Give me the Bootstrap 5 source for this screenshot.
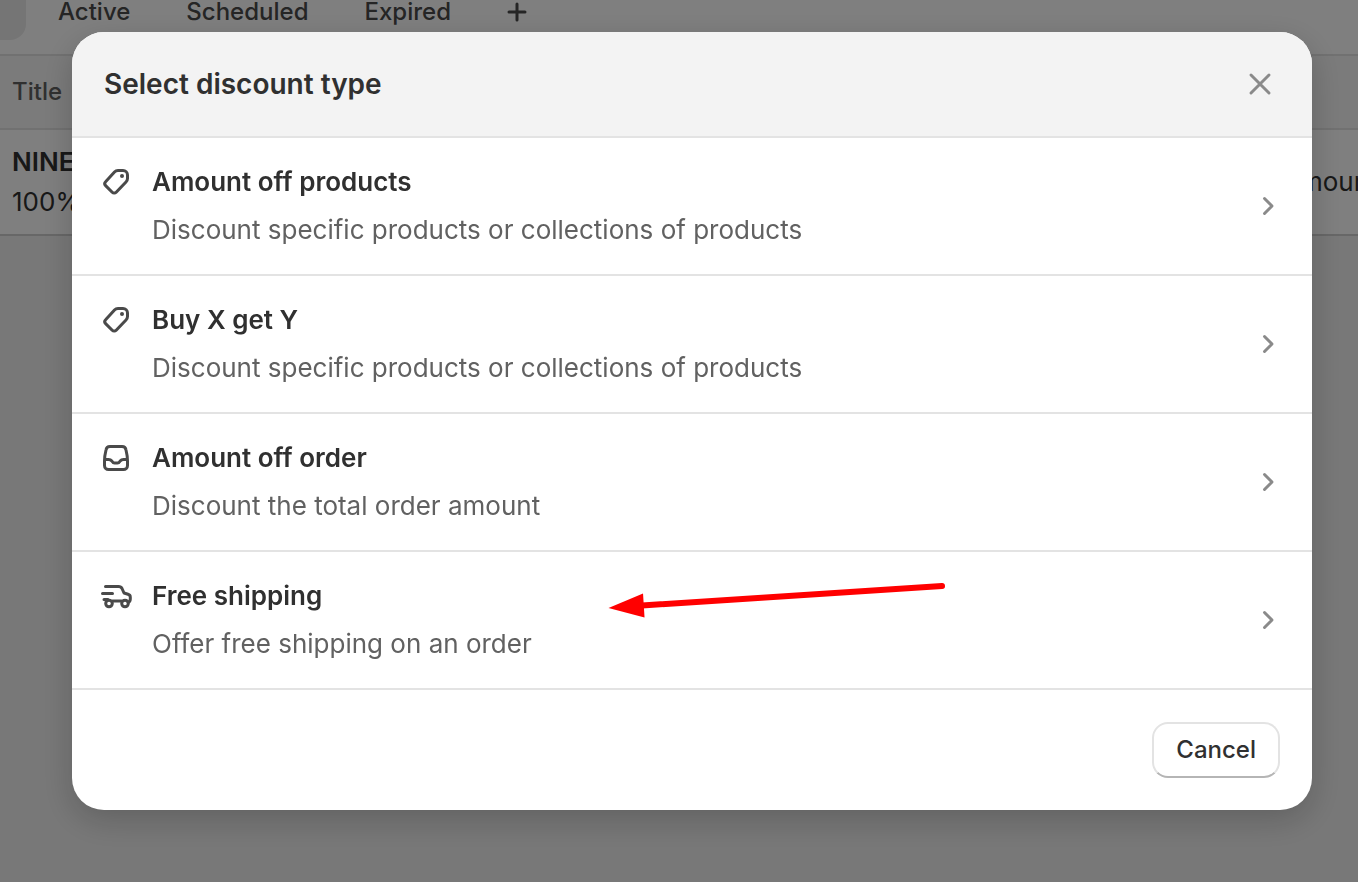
<!DOCTYPE html>
<html lang="en">
<head>
<meta charset="utf-8">
<meta name="viewport" content="width=device-width, initial-scale=1">
<title>Discounts</title>
<link href="https://cdn.jsdelivr.net/npm/bootstrap@5.3.0/dist/css/bootstrap.min.css" rel="stylesheet">
<style>
  body { font-family: Inter, "Liberation Sans", sans-serif; font-size: 26px; line-height: 40px; color: #303030; background: #f1f1f1; }
  .page { background: #fff; border-bottom: 2px solid #cfcfcf; }
  .tabs { height: 56px; padding-left: 58px; gap: 56px; border-bottom: 2px solid #e3e3e3; font-size: 24px; font-weight: 500; line-height: 24px; }
  .tabs a { color: #4a4a4a; }
  .tab-all { top: 0; left: 0; width: 26px; height: 40px; background: #ebebeb; border-radius: 0 0 16px 0; }
  .tabs button { color: #4a4a4a; }
  .orders { table-layout: fixed; border-collapse: separate; border-spacing: 0; width: 100%; margin: 0; }
  .orders th { height: 74px; padding: 0 12px; background: #f7f7f7; border-bottom: 2px solid #e3e3e3; font-size: 24px; font-weight: 500; color: #616161; }
  .orders td { height: 104px; padding: 0 12px; color: #303030; font-weight: 400; white-space: nowrap; overflow: hidden; }
  .orders .col-type { width: 76px; padding: 0; }
  .orders strong { font-weight: 600; }
  .scrim { background: rgba(0, 0, 0, .5); padding: 32px 46px 32px 72px; }
  .sheet { background: #fff; border-radius: 32px; box-shadow: 0 10px 32px rgba(0, 0, 0, .2); }
  .sheet-head { background: #f3f3f3; border-bottom: 2px solid #e3e3e3; border-radius: 32px 32px 0 0; padding: 32px; }
  .sheet-head h1 { font-size: 28px; line-height: 40px; font-weight: 600; }
  .sheet-head button { width: 40px; height: 40px; color: #8a8a8a; }
  .option { padding: 24px; border-bottom: 2px solid #e3e3e3; color: #303030; gap: 16px; }
  .option-icon { width: 40px; height: 40px; color: #4a4a4a; }
  .option-name { font-weight: 600; line-height: 40px; }
  .option-note { font-weight: 400; line-height: 40px; margin-top: 8px; color: #616161; }
  .chevron { color: #8a8a8a; }
  .pointer { left: 536px; top: 28px; }
  .sheet-foot { padding: 32px; }
  .btn-cancel { height: 56px; padding: 0 22px; border: 2px solid #e3e3e3; border-bottom-color: #b5b5b5; border-radius: 16px; font-size: 24px; font-weight: 500; line-height: 24px; color: #303030; background: #fff; }
  svg { fill: none; stroke: currentColor; stroke-width: 3; stroke-linecap: round; stroke-linejoin: round; display: block; }
</style>
</head>
<body>
<main class="page">
  <nav class="tabs d-flex align-items-start position-relative" aria-label="Discount views">
    <span class="tab-all position-absolute"></span>
    <a class="text-decoration-none" href="#active">Active</a>
    <a class="text-decoration-none" href="#scheduled">Scheduled</a>
    <a class="text-decoration-none" href="#expired">Expired</a>
    <button type="button" class="border-0 bg-transparent p-0" aria-label="Create view">
      <svg width="20" height="24" viewBox="0 0 20 24"><path d="M2 12H18M10 4V20"/></svg>
    </button>
  </nav>
  <table class="orders">
    <thead><tr><th scope="col">Title</th><th class="col-type"></th></tr></thead>
    <tbody><tr><td><strong>NINE</strong><br>100% off</td><td class="col-type">Amount off</td></tr></tbody>
  </table>
</main>

<div class="scrim position-fixed top-0 start-0 w-100 h-100 overflow-auto">
  <section class="sheet" role="dialog" aria-modal="true" aria-labelledby="dialog-title">
    <header class="sheet-head d-flex align-items-center justify-content-between">
      <h1 class="m-0" id="dialog-title">Select discount type</h1>
      <button type="button" class="border-0 bg-transparent p-0" aria-label="Close">
        <svg width="40" height="40" viewBox="0 0 40 40"><path d="M11 11L29 29M29 11L11 29"/></svg>
      </button>
    </header>

    <a class="option d-flex text-decoration-none" href="#products">
      <span class="option-icon flex-shrink-0"><svg width="40" height="40" viewBox="-4 -4 40 40"><path d="M18 4.500H23A4.500 4.500 0 0 1 27.500 9V12.500A5 5 0 0 1 26 16L16.200 26.200A2.800 2.800 0 0 1 12.200 26.200L5.600 19.600A2.800 2.800 0 0 1 5.600 15.700L14.500 6A4.800 4.800 0 0 1 18 4.500Z"/><circle cx="22" cy="10" r="2" fill="currentColor" stroke="none"/></svg></span>
      <span class="flex-grow-1"><span class="option-name d-block">Amount off products</span><span class="option-note d-block">Discount specific products or collections of products</span></span>
      <svg class="chevron align-self-center" width="40" height="40" viewBox="0 0 40 40"><path d="M16.500 12.500L24 20L16.500 27.500"/></svg>
    </a>
    <a class="option d-flex text-decoration-none" href="#buy-x-get-y">
      <span class="option-icon flex-shrink-0"><svg width="40" height="40" viewBox="-4 -4 40 40"><path d="M18 4.500H23A4.500 4.500 0 0 1 27.500 9V12.500A5 5 0 0 1 26 16L16.200 26.200A2.800 2.800 0 0 1 12.200 26.200L5.600 19.600A2.800 2.800 0 0 1 5.600 15.700L14.500 6A4.800 4.800 0 0 1 18 4.500Z"/><circle cx="22" cy="10" r="2" fill="currentColor" stroke="none"/></svg></span>
      <span class="flex-grow-1"><span class="option-name d-block">Buy X get Y</span><span class="option-note d-block">Discount specific products or collections of products</span></span>
      <svg class="chevron align-self-center" width="40" height="40" viewBox="0 0 40 40"><path d="M16.500 12.500L24 20L16.500 27.500"/></svg>
    </a>
    <a class="option d-flex text-decoration-none" href="#order">
      <span class="option-icon flex-shrink-0"><svg width="40" height="40" viewBox="-4 -4 40 40"><path d="M10 4.500H22A4 4 0 0 1 26 8Q27.500 14 27.500 19V23.500A4 4 0 0 1 23.500 27.500H8.500A4 4 0 0 1 4.500 23.500V19Q4.500 14 6 8A4 4 0 0 1 10 4.500ZM4.500 17.500H8.500C10.500 17.500 11 18 11.800 19C12.500 20.200 13 21 14.500 21H17.500C19 21 19.500 20.200 20.200 19C21 18 21.500 17.500 23.500 17.500H27.500"/></svg></span>
      <span class="flex-grow-1"><span class="option-name d-block">Amount off order</span><span class="option-note d-block">Discount the total order amount</span></span>
      <svg class="chevron align-self-center" width="40" height="40" viewBox="0 0 40 40"><path d="M16.500 12.500L24 20L16.500 27.500"/></svg>
    </a>
    <a class="option d-flex text-decoration-none position-relative" href="#shipping">
      <span class="option-icon flex-shrink-0"><svg width="40" height="40" viewBox="-4 -4 40 40"><path d="M5.500 6.500H18.500Q21 6.500 22 8.500L24 13L28 14.300Q30.300 15 30.300 17.200V19Q30.300 21.500 28.200 22.500M2.500 13.500H12.500M4 19.500H8M12.500 21H21.500"/><circle cx="9" cy="23.500" r="3.300"/><circle cx="25" cy="23.500" r="3.300"/></svg></span>
      <span class="flex-grow-1"><span class="option-name d-block">Free shipping</span><span class="option-note d-block">Offer free shipping on an order</span></span>
      <svg class="chevron align-self-center" width="40" height="40" viewBox="0 0 40 40"><path d="M16.500 12.500L24 20L16.500 27.500"/></svg>
      <svg class="pointer position-absolute" width="340" height="40" viewBox="0 0 340 40" aria-hidden="true"><path d="M34 25.500L334 6" stroke="#f00" stroke-width="6"/><path d="M0.500 28L35 13.500L36.500 37.500Z" fill="#f00" stroke="none"/></svg>
    </a>

    <footer class="sheet-foot d-flex justify-content-end">
      <button type="button" class="btn-cancel">Cancel</button>
    </footer>
  </section>
</div>
<script src="https://cdn.jsdelivr.net/npm/bootstrap@5.3.0/dist/js/bootstrap.bundle.min.js"></script>
</body>
</html>
